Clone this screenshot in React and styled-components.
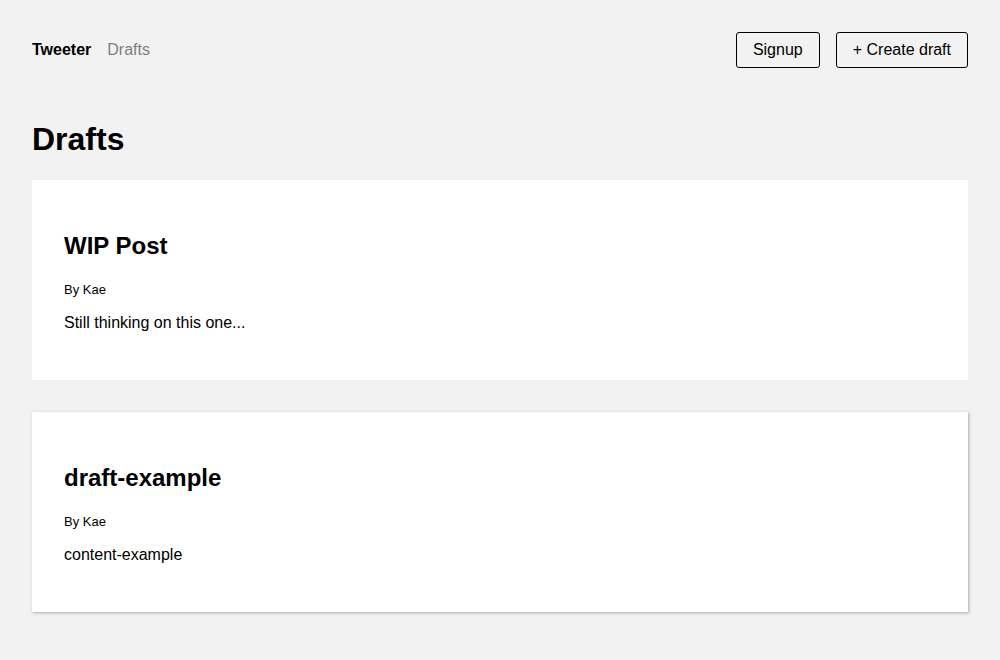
import styled, { createGlobalStyle } from 'styled-components'

const drafts = [
  { id: 1, title: 'WIP Post', author: 'Kae', content: 'Still thinking on this one...', hovered: false },
  { id: 2, title: 'draft-example', author: 'Kae', content: 'content-example', hovered: true },
]

const App = () => {
  return (
    <>
      <GlobalStyle />
      <Nav>
        <Left>
          <NavLink $active>Tweeter</NavLink>
          <NavLink>Drafts</NavLink>
        </Left>
        <Right>
          <Button>Signup</Button>
          <Button>+ Create draft</Button>
        </Right>
      </Nav>
      <Main>
        <Title>Drafts</Title>
        <List>
          {drafts.map((post) => (
            <Post key={post.id} $hovered={post.hovered}>
              <PostTitle>{post.title}</PostTitle>
              <small>By {post.author}</small>
              <Content>{post.content}</Content>
            </Post>
          ))}
        </List>
      </Main>
    </>
  )
}

const GlobalStyle = createGlobalStyle`
  html, body {
    margin: 0;
    padding: 0;
    background: #f2f2f2;
    font-family: "Liberation Sans", Arial, sans-serif;
    font-size: 16px;
    color: #000;
  }
`

const Nav = styled.nav`
  display: flex;
  align-items: center;
  justify-content: space-between;
  padding: 32px;
`

const Left = styled.div`
  display: flex;
  gap: 16px;
`

const NavLink = styled.a`
  text-decoration: none;
  color: ${(p) => (p.$active ? '#000' : 'gray')};
  font-weight: ${(p) => (p.$active ? 'bold' : 'normal')};
  cursor: pointer;
`

const Right = styled.div`
  display: flex;
  gap: 16px;
`

const Button = styled.a`
  border: 1px solid black;
  padding: 8px 16px;
  border-radius: 3px;
  color: #000;
  line-height: 18px;
  cursor: pointer;
`

const Main = styled.main`
  padding: 0 32px 32px;
`

const Title = styled.h1`
  font-size: 32px;
  margin: 21px 0 22px;
`

const List = styled.div`
  display: flex;
  flex-direction: column;
  gap: 32px;
`

const Post = styled.div`
  background: white;
  padding: 32px;
  box-shadow: ${(p) => (p.$hovered ? '1px 1px 3px #aaa' : 'none')};
  small {
    font-size: 13px;
  }
`

const PostTitle = styled.h2`
  font-size: 24px;
  margin: 20px 0;
`

const Content = styled.p`
  margin: 16px 0;
`

export default App
